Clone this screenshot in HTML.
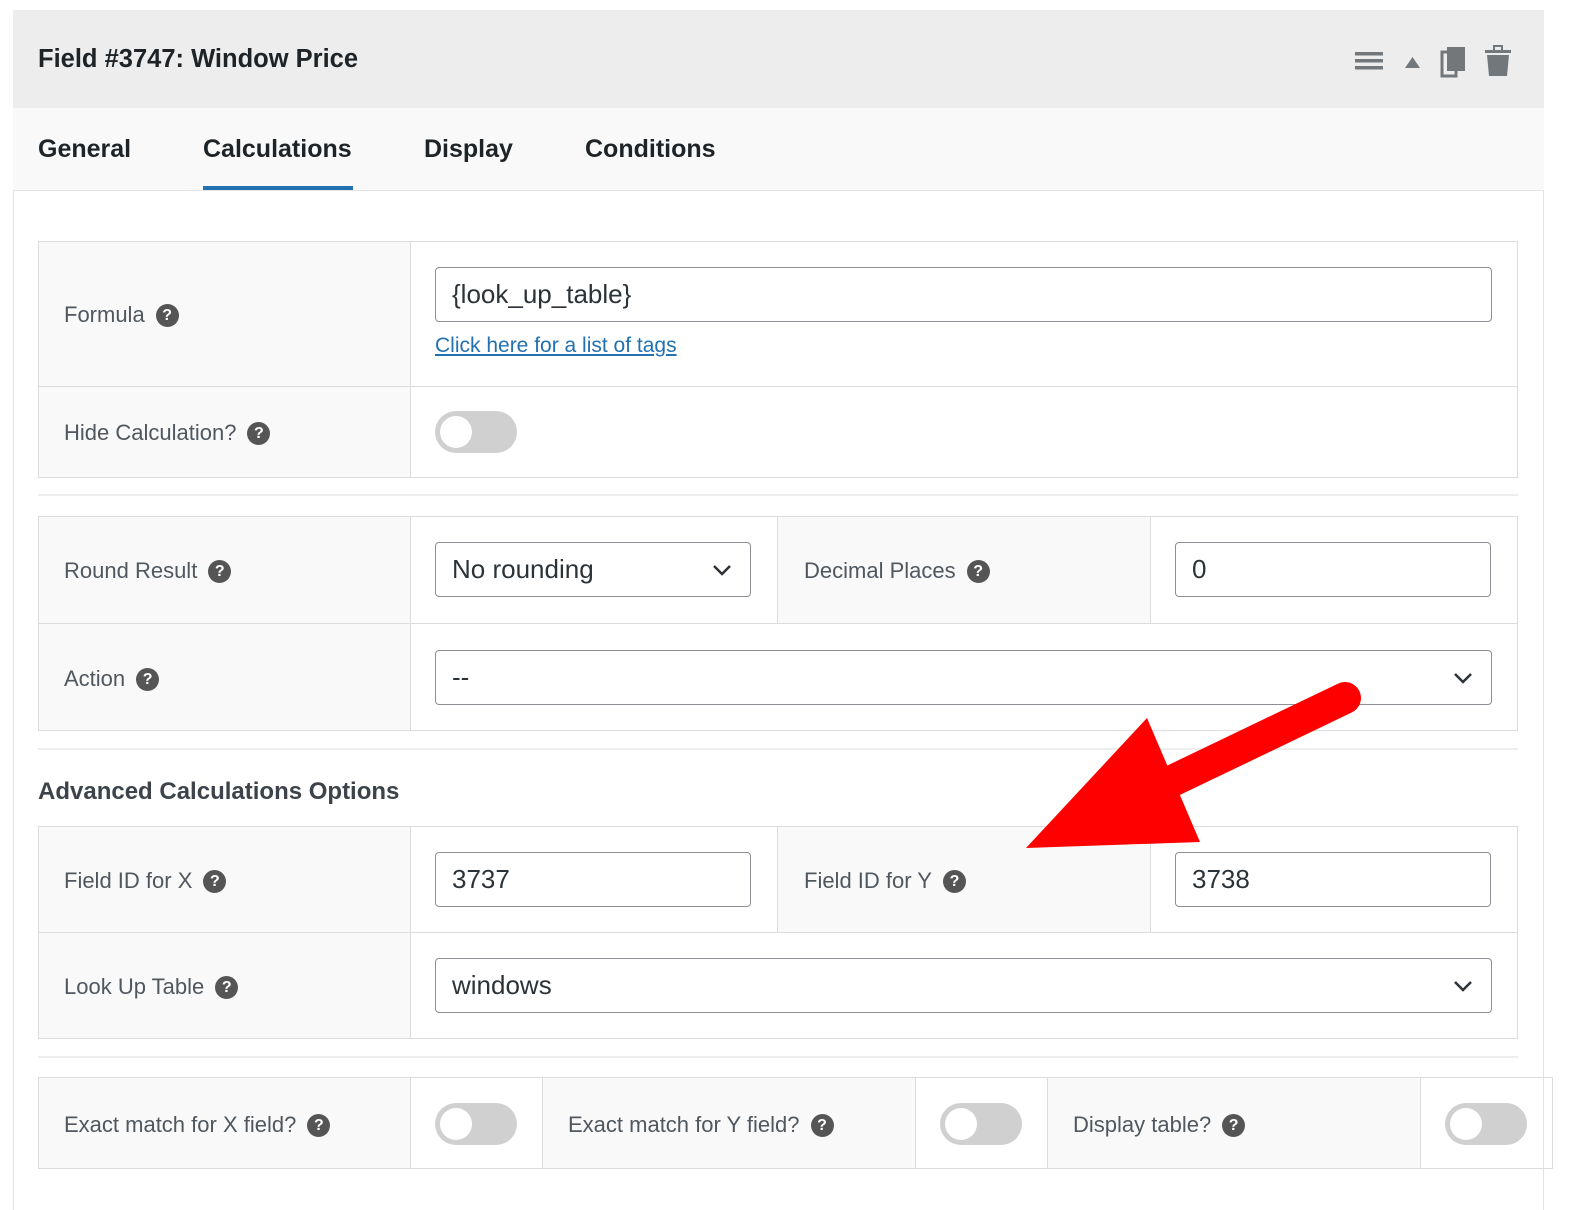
<!DOCTYPE html>
<html><head><meta charset="utf-8"><style>
*{box-sizing:border-box;margin:0;padding:0}
body{width:1577px;height:1200px;background:#fff;font-family:"Liberation Sans",Arial,sans-serif;position:relative;overflow:hidden;color:#3c434a}
.a{position:absolute}
.panel{left:13px;top:10px;width:1531px;height:1200px;border-left:1px solid #e2e2e2;border-right:1px solid #e2e2e2}
.hdr{left:13px;top:10px;width:1531px;height:98px;background:#ededed}
.tabs{left:13px;top:108px;width:1531px;height:83px;background:#f9f9f9;border-bottom:1px solid #e4e4e4}
.tab{top:135px;font-size:25px;font-weight:bold;color:#1d2327}
.cell{position:absolute;border:1px solid #dcdcdc}
.lab{background:#f9f9f9}
.lt{position:absolute;font-size:22px;color:#50575e;display:flex;align-items:center;gap:11px;white-space:nowrap}
.q{display:inline-block;width:23px;height:23px;border-radius:50%;background:#555;color:#fff;font-size:16px;font-weight:bold;text-align:center;line-height:23px}
.inp{position:absolute;border:1px solid #8c8f94;border-radius:4px;background:#fff;font-size:26px;color:#2c3338;padding-left:16px;display:flex;align-items:center}
.chev{position:absolute;right:18px;top:50%;margin-top:-7px}
.tog{position:absolute;width:82px;height:42px;border-radius:21px;background:#d0d0d0}
.tog::after{content:"";position:absolute;left:5px;top:5px;width:32px;height:32px;border-radius:50%;background:#fff}
.sep{position:absolute;left:38px;width:1480px;height:2px;background:#eeeeee}
</style></head><body>
<div class="a panel"></div>
<div class="a hdr"></div>
<div class="a" style="left:38px;top:45px;font-size:25.5px;font-weight:bold;color:#1d2327">Field #3747: Window Price</div>
<svg class="a" style="left:1350px;top:40px" width="170" height="42" viewBox="0 0 170 42">
<rect x="5" y="12" width="28" height="3.5" fill="#72777c"/><rect x="5" y="19" width="28" height="3.5" fill="#72777c"/><rect x="5" y="26" width="28" height="3.5" fill="#72777c"/>
<polygon points="55,28 70,28 62.5,17" fill="#72777c"/>
<rect x="92" y="12" width="14" height="24" fill="none" stroke="#72777c" stroke-width="3"/><rect x="97" y="7" width="18" height="24" fill="#72777c"/>
<rect x="135" y="10" width="26" height="3" fill="#72777c"/><rect x="144" y="6" width="8" height="5" fill="none" stroke="#72777c" stroke-width="2"/><path d="M137 15 H159 L157 36 H139 Z" fill="#72777c"/>
</svg>
<div class="a tabs"></div>
<div class="a tab" style="left:38px">General</div>
<div class="a tab" style="left:203px">Calculations</div>
<div class="a" style="left:203px;top:186px;width:150px;height:4px;background:#2271b1"></div>
<div class="a tab" style="left:424px">Display</div>
<div class="a tab" style="left:585px">Conditions</div>

<div class="cell lab" style="left:38px;top:241px;width:373px;height:146px"></div>
<div class="cell" style="left:410px;top:241px;width:1108px;height:146px"></div>
<div class="cell lab" style="left:38px;top:386px;width:373px;height:92px"></div>
<div class="cell" style="left:410px;top:386px;width:1108px;height:92px"></div>
<div class="lt" style="left:64px;top:302px">Formula <span class="q">?</span></div>
<div class="inp" style="left:435px;top:267px;width:1057px;height:55px">{look_up_table}</div>
<div class="a" style="left:435px;top:334px;font-size:21px;color:#2271b1;text-decoration:underline">Click here for a list of tags</div>
<div class="lt" style="left:64px;top:420px">Hide Calculation? <span class="q">?</span></div>
<div class="tog" style="left:435px;top:411px"></div>
<div class="sep" style="top:494px"></div>

<div class="cell lab" style="left:38px;top:516px;width:373px;height:108px"></div>
<div class="cell" style="left:410px;top:516px;width:368px;height:108px"></div>
<div class="cell lab" style="left:777px;top:516px;width:374px;height:108px"></div>
<div class="cell" style="left:1150px;top:516px;width:368px;height:108px"></div>
<div class="cell lab" style="left:38px;top:623px;width:373px;height:108px"></div>
<div class="cell" style="left:410px;top:623px;width:1108px;height:108px"></div>
<div class="lt" style="left:64px;top:558px">Round Result <span class="q">?</span></div>
<div class="inp" style="left:435px;top:542px;width:316px;height:55px">No rounding<svg class="chev" width="20" height="14"><path d="M2 3 L10 11 L18 3" fill="none" stroke="#2c3338" stroke-width="2.5"/></svg></div>
<div class="lt" style="left:804px;top:558px">Decimal Places <span class="q">?</span></div>
<div class="inp" style="left:1175px;top:542px;width:316px;height:55px">0</div>
<div class="lt" style="left:64px;top:666px">Action <span class="q">?</span></div>
<div class="inp" style="left:435px;top:650px;width:1057px;height:55px">--<svg class="chev" width="20" height="14"><path d="M2 3 L10 11 L18 3" fill="none" stroke="#2c3338" stroke-width="2.5"/></svg></div>
<div class="sep" style="top:748px"></div>

<div class="a" style="left:38px;top:778px;font-size:24px;font-weight:bold;color:#3c434a">Advanced Calculations Options</div>

<div class="cell lab" style="left:38px;top:826px;width:373px;height:107px"></div>
<div class="cell" style="left:410px;top:826px;width:368px;height:107px"></div>
<div class="cell lab" style="left:777px;top:826px;width:374px;height:107px"></div>
<div class="cell" style="left:1150px;top:826px;width:368px;height:107px"></div>
<div class="cell lab" style="left:38px;top:932px;width:373px;height:107px"></div>
<div class="cell" style="left:410px;top:932px;width:1108px;height:107px"></div>
<div class="lt" style="left:64px;top:868px">Field ID for X <span class="q">?</span></div>
<div class="inp" style="left:435px;top:852px;width:316px;height:55px">3737</div>
<div class="lt" style="left:804px;top:868px">Field ID for Y <span class="q">?</span></div>
<div class="inp" style="left:1175px;top:852px;width:316px;height:55px">3738</div>
<div class="lt" style="left:64px;top:974px">Look Up Table <span class="q">?</span></div>
<div class="inp" style="left:435px;top:958px;width:1057px;height:55px">windows<svg class="chev" width="20" height="14"><path d="M2 3 L10 11 L18 3" fill="none" stroke="#2c3338" stroke-width="2.5"/></svg></div>
<div class="sep" style="top:1056px"></div>

<div class="cell lab" style="left:38px;top:1077px;width:373px;height:92px"></div>
<div class="cell" style="left:410px;top:1077px;width:133px;height:92px"></div>
<div class="cell lab" style="left:542px;top:1077px;width:374px;height:92px"></div>
<div class="cell" style="left:915px;top:1077px;width:133px;height:92px"></div>
<div class="cell lab" style="left:1047px;top:1077px;width:374px;height:92px"></div>
<div class="cell" style="left:1420px;top:1077px;width:133px;height:92px"></div>
<div class="lt" style="left:64px;top:1112px">Exact match for X field? <span class="q">?</span></div>
<div class="tog" style="left:435px;top:1103px"></div>
<div class="lt" style="left:568px;top:1112px">Exact match for Y field? <span class="q">?</span></div>
<div class="tog" style="left:940px;top:1103px"></div>
<div class="lt" style="left:1073px;top:1112px">Display table? <span class="q">?</span></div>
<div class="tog" style="left:1445px;top:1103px"></div>

<svg class="a" style="left:0;top:0" width="1577" height="1200">
<line x1="1345" y1="698" x2="1170" y2="782" stroke="#ff0000" stroke-width="32" stroke-linecap="round"/>
<polygon points="1147,718 1200,842 1026,848" fill="#ff0000"/>
</svg>
</body></html>
